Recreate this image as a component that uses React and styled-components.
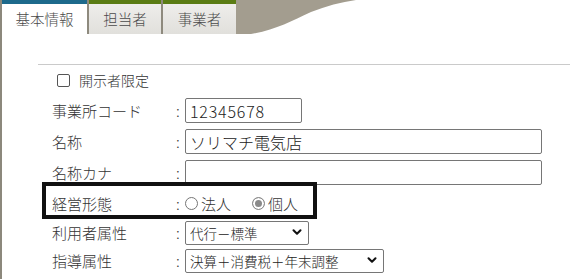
import styled, { createGlobalStyle } from "styled-components"
import { ChevronDown } from "lucide-react"

const Global = createGlobalStyle`
    body {
        margin: 0;
        background: #fff;
        font-family: "Noto Sans CJK JP", "Noto Sans", sans-serif;
        font-weight: 300;
        color: #333;
    }
`

const Page = styled.div`
    height: 279px;
    border-left: 2px solid #8c887c;
    overflow: hidden;
`

const TabBar = styled.div`
    display: flex;
    height: 34px;
`

const Tab = styled.div`
    width: ${({ $w }) => $w}px;
    box-sizing: border-box;
    border-top: 4px solid ${({ $active }) => ($active ? "#1d6a8c" : "#5a7c14")};
    background: ${({ $active }) => ($active ? "#fff" : "linear-gradient(#eeedeb, #e1e0dc)")};
    display: flex;
    align-items: center;
    justify-content: center;
    padding-bottom: 2px;
    font-size: 14.5px;
    color: #4a4a4a;
`

const TabGap = styled.div`
    width: 2px;
    background: #8e8a7e;
`

const Swoosh = styled.svg`
    display: block;
`

const Content = styled.div`
    padding: 30px 0 0 36px;
`

const Divider = styled.div`
    border-top: 1px solid #cacaca;
`

const Form = styled.div`
    padding-left: 14px;
`

const CheckRow = styled.label`
    display: flex;
    align-items: center;
    gap: 9px;
    height: 30px;
    padding-left: 5px;
    font-size: 14px;
    color: #333;
`

const Box = styled.span`
    width: 13px;
    height: 13px;
    box-sizing: border-box;
    border: 1px solid #555;
    border-radius: 2px;
`

const Row = styled.div`
    position: relative;
    display: flex;
    align-items: center;
    height: ${({ $h }) => $h}px;
`

const Highlight = styled.div`
    position: absolute;
    left: -10px;
    top: -6px;
    width: 275px;
    height: 37px;
    box-sizing: border-box;
    border: 4px solid #111;
    pointer-events: none;
`

const Label = styled.div`
    width: 119px;
    font-size: 15px;
    color: #333;
`

const Colon = styled.div`
    width: 14px;
    font-size: 15px;
    text-align: center;
    color: #333;
`

const TextInput = styled.input`
    width: ${({ $w }) => $w}px;
    height: 25px;
    box-sizing: border-box;
    border: 1px solid #767676;
    border-radius: 2px;
    padding: 0 4px;
    font-family: inherit;
    font-weight: 300;
    font-size: 16px;
    letter-spacing: ${({ $num }) => ($num ? "0.8px" : "0")};
    color: #222;
    outline: none;
`

const RadioGroup = styled.div`
    display: flex;
    align-items: center;
    gap: 21px;
`

const RadioOption = styled.label`
    display: flex;
    align-items: center;
    gap: 3px;
    font-size: 15px;
    color: #333;
`

const Dot = styled.span`
    width: 13px;
    height: 13px;
    box-sizing: border-box;
    border-radius: 50%;
    border: 1px solid ${({ $on }) => ($on ? "#8a8a8a" : "#767676")};
    background: ${({ $on }) => ($on ? "#8a8a8a" : "#fff")};
    box-shadow: ${({ $on }) => ($on ? "inset 0 0 0 2px #fff" : "none")};
`

const SelectWrap = styled.div`
    position: relative;
    width: ${({ $w }) => $w}px;
`

const Select = styled.select`
    appearance: none;
    width: 100%;
    height: 24px;
    box-sizing: border-box;
    border: 1px solid #767676;
    border-radius: 2px;
    background: #fff;
    padding: 0 4px;
    font-family: inherit;
    font-weight: 300;
    font-size: 13.5px;
    color: #222;
`

const Chevron = styled(ChevronDown)`
    position: absolute;
    right: 5px;
    top: 5px;
    pointer-events: none;
    color: #111;
`

const TextField = ({ label, value, w, num }) => (
    <Row $h={31}>
        <Label>{label}</Label>
        <Colon>:</Colon>
        <TextInput $w={w} $num={num} defaultValue={value} />
    </Row>
)

const SelectField = ({ label, value, w, h }) => (
    <Row $h={h}>
        <Label>{label}</Label>
        <Colon>:</Colon>
        <SelectWrap $w={w}>
            <Select defaultValue={value}>
                <option>{value}</option>
            </Select>
            <Chevron size={14} strokeWidth={3.5} />
        </SelectWrap>
    </Row>
)

const App = () => {
    return (
        <Page>
            <Global />
            <TabBar>
                <Tab $active $w={85}>基本情報</Tab>
                <TabGap />
                <Tab $w={72}>担当者</Tab>
                <TabGap />
                <Tab $w={73}>事業者</Tab>
                <Swoosh width="124" height="34" viewBox="0 0 124 34">
                    <path d="M0 0 H120 C105 2 90 6 75 12 C55 21 40 30 15 34 H0 Z" fill="#a39d8f" />
                </Swoosh>
            </TabBar>
            <Content>
                <Divider />
                <Form>
                    <CheckRow>
                        <Box />
                        開示者限定
                    </CheckRow>
                    <TextField label="事業所コード" value="12345678" w={117} num />
                    <TextField label="名称" value="ソリマチ電気店" w={357} />
                    <TextField label="名称カナ" value="" w={357} />
                    <Row $h={30}>
                        <Highlight />
                        <Label>経営形態</Label>
                        <Colon>:</Colon>
                        <RadioGroup>
                            <RadioOption><Dot />法人</RadioOption>
                            <RadioOption><Dot $on />個人</RadioOption>
                        </RadioGroup>
                    </Row>
                    <SelectField label="利用者属性" value="代行－標準" w={124} h={28} />
                    <SelectField label="指導属性" value="決算＋消費税＋年末調整" w={199} h={28} />
                </Form>
            </Content>
        </Page>
    )
}

export default App
